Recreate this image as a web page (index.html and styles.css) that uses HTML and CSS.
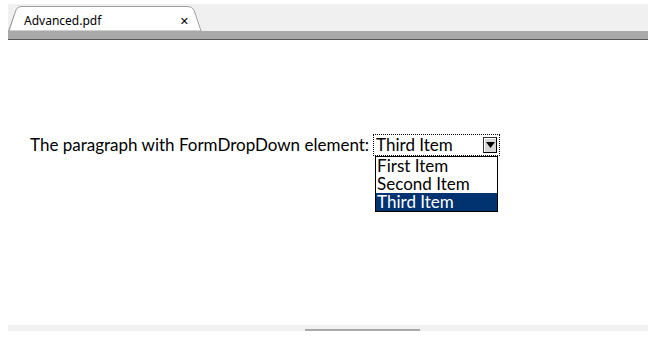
FILE: index.html
```html
<!DOCTYPE html>
<html>
<head>
<meta charset="utf-8">
<link rel="stylesheet" href="styles.css">
</head>
<body>
<div class="viewer">
  <div class="tabbar">
    <svg class="tabshape" width="200" height="27" viewBox="0 0 200 27">
      <path d="M0.5 27 L4.5 16 Q8 4 14 3.5" fill="none" stroke="#a0a0a0" stroke-width="1"/>
      <path d="M1 27 L8 6 Q9.5 2.5 13 2.5 L180 2.5 Q184 2.5 186 6 L193 27 Z" fill="#ffffff" stroke="#a0a0a0" stroke-width="1"/>
    </svg>
    <div class="tab">
      <span class="tab-title">Advanced.pdf</span>
      <span class="tab-close">✕</span>
    </div>
  </div>
  <div class="graybar"></div>
  <div class="page">
    <div class="para">
      <span class="label">The paragraph with FormDropDown element:</span>
      <div class="dropdown">
        <div class="dd-field">
          <span class="dd-value">Third Item</span>
          <span class="dd-btn"><svg width="9" height="6" viewBox="0 0 9 6"><path d="M0 0 L9 0 L4.5 6 Z" fill="#000"/></svg></span>
        </div>
        <ul class="dd-list">
          <li>First Item</li>
          <li>Second Item</li>
          <li class="sel">Third Item</li>
        </ul>
      </div>
    </div>
  </div>
  <div class="hscroll"><div class="thumb"></div></div>
</div>
</body>
</html>
```
FILE: styles.css
```css
html, body { margin: 0; padding: 0; background: #ffffff; }
body { width: 666px; height: 341px; overflow: hidden; }
.viewer { margin: 4px 18px 0 8px; width: 640px; }
.tabbar { position: relative; height: 27px; background: #f0f0f0; }
.tabshape { position: absolute; left: 0; top: 0; }
.tab { position: relative; display: flex; align-items: center; height: 27px; width: 193px; }
.tab-title { margin-left: 16px; font-family: "Noto Sans", sans-serif; font-size: 12px; color: #000; padding-top: 6px; }
.tab-close { margin-left: auto; margin-right: 12px; font-family: "DejaVu Sans", sans-serif; font-size: 11px; color: #000; padding-top: 8px; }
.graybar { height: 8px; background: #a9a9a9; border-bottom: 1px solid #555555; }
.page { height: 285px; }
.para { display: flex; align-items: flex-start; padding: 94px 0 0 22px; }
.label { font-family: Lato, sans-serif; font-size: 17px; line-height: 20px; color: #000; margin-top: 1px; }
.dropdown { margin-left: 4px; width: 127px; }
.dd-field { display: flex; align-items: center; border: 1px dotted #000; box-sizing: border-box; height: 22px; }
.dd-value { font-family: Lato, sans-serif; font-size: 17px; line-height: 18px; margin-left: 2px; }
.dd-btn { margin-left: auto; margin-right: 2px; width: 14px; height: 16px; background: #d8d8d8; border: 1px solid #333; border-right-color: #000; border-bottom-color: #000; box-sizing: border-box; display: flex; align-items: center; justify-content: center; box-shadow: inset 1px 1px 0 #fff; }
.dd-list { list-style: none; margin: 0 2px 0 2px; padding: 0; border: 1px solid #000; width: 121px; }
.dd-list li { font-family: Lato, sans-serif; font-size: 17px; line-height: 18px; height: 18px; padding-left: 1px; color: #000; }
.dd-list li.sel { background: #003370; color: #ffffff; }
.hscroll { position: relative; height: 6px; background: #f0f0f0; }
.thumb { position: absolute; left: 297px; width: 115px; bottom: 0; height: 2px; background: #a9a9a9; }
```
